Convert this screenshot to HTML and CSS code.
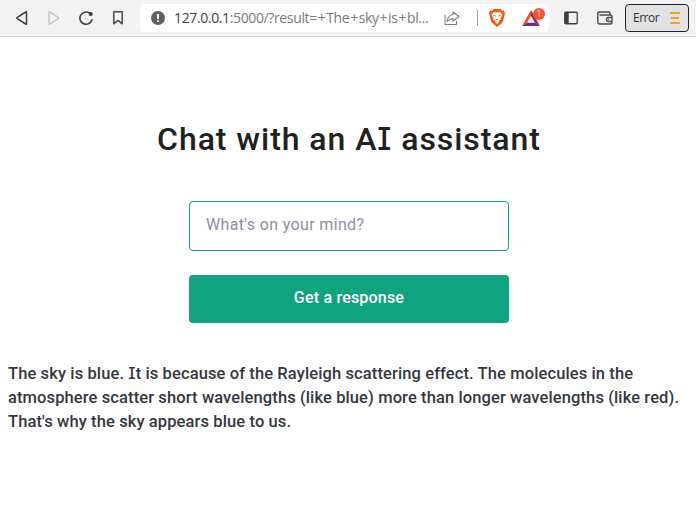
FILE: index.html
```html
<!DOCTYPE html>
<html lang="en">
<head>
<meta charset="utf-8">
<title>Chat with an AI assistant</title>
<link rel="stylesheet" href="styles.css">
</head>
<body>
<header class="toolbar">
  <nav class="nav">
    <svg width="14" height="16" viewBox="0 0 14 16"><path d="M11.500 2.300v11.400q0 .8-.8.3L2.300 8.600q-.8-.6 0-1.200L10.700 2q.8-.5.8.3z" fill="none" stroke="#3b3e43" stroke-width="1.500" stroke-linejoin="round"/></svg>
    <svg width="14" height="16" viewBox="0 0 14 16"><path d="M2 2.300v11.400q0 .8.8.3l8.400-5.400q.8-.6 0-1.200L2.800 2Q2 1.500 2 2.300z" fill="none" stroke="#c3c5c7" stroke-width="1.500" stroke-linejoin="round"/></svg>
    <svg width="14" height="16" viewBox="1 0 14 16"><path d="M11.700 3.300A6.100 6.100 0 1 0 13.900 9.800" fill="none" stroke="#3b3e43" stroke-width="1.600" stroke-linecap="round"/><circle cx="12.700" cy="4" r="2" fill="#3b3e43"/></svg>
    <svg width="14" height="16" viewBox="-1 0 14 16"><path d="M1.800 1.800h8.400v12L6 10.400l-4.200 3.400z" fill="none" stroke="#484b50" stroke-width="1.500" stroke-linejoin="round"/></svg>
  </nav>
  <div class="address">
    <svg class="info" width="14" height="14" viewBox="0 0 14 14"><circle cx="7" cy="7" r="7" fill="#5f6368"/><path d="M7 3v5M7 9.300v1.800" stroke="#fff" stroke-width="1.800"/></svg>
    <span class="url"><span class="host">127.0.0.1</span>:5000/?result=<span class="sep">+</span>The<span class="sep">+</span>sky<span class="sep">+</span>is<span class="sep">+</span>bl...</span>
    <svg class="share" width="16" height="16" viewBox="0 0 16 16"><path d="M1 4.500v10h11.500V11" fill="none" stroke="#777b80"/><path d="M9 2l6 4.500L9 11V8.700Q5.500 8.600 3 11.500 4 5 9 4.500z" fill="none" stroke="#777b80" stroke-width="1.100" stroke-linejoin="round"/></svg>
    <span class="divider"></span>
    <svg class="brave" width="16" height="18" viewBox="0 0 16 18"><path d="M4.500 0h7L13 1.700l1.700-.2L16 4l-.5 2-1.700 6.500q-.3 1-1.200 1.700L8 18l-4.600-3.800q-.9-.7-1.200-1.700L.5 6 0 4l1.300-2.500 1.700.2z" fill="#fb5410"/><path d="M4.700 3l3.300.6 3.300-.6 2.200 3-1.800 3.200.3 1.200-2.300 1.500.3 1.300-2 1.800-2-1.800.3-1.300-2.300-1.500.3-1.200L2.500 6z" fill="#fff"/><path d="M4.400 6.300l2.200.6M11.600 6.300l-2.200.6M6.800 10l1.200.8 1.200-.8" fill="none" stroke="#fb5410" stroke-width=".9"/></svg>
    <span class="rewards">
      <svg width="18" height="16" viewBox="0 0 18 16"><path d="M9 0L0 16l5-3.200 4-7z" fill="#ff4724"/><path d="M0 16h18l-5-3.200H5z" fill="#662d91"/><path d="M9 0l9 16-5-3.200-4-7z" fill="#9e1f63"/></svg>
      <span class="badge">1</span>
    </span>
  </div>
  <svg class="panel" width="14" height="14" viewBox="0 0 14 14"><rect x=".75" y="1.250" width="12.500" height="11.500" rx="1" fill="none" stroke="#3b3e43" stroke-width="1.300"/><path d="M1 1h3.700v12H1z" fill="#3b3e43"/></svg>
  <svg class="wallet" width="16" height="14" viewBox="0 0 16 14"><path d="M13 3.800V2.200Q13 1 11.800 1H2.500Q.8 1 .8 2.500v8.800Q.8 13 2.500 13h11q1.500 0 1.500-1.500V5.300Q15 4 13.500 4H2.500M15 6.500h-3.500a2 2 0 0 0 0 4H15M11.300 8.500h1" fill="none" stroke="#484b50" stroke-width="1.400"/></svg>
  <button class="menu"><span>Error</span><svg width="10" height="12" viewBox="0 0 10 12"><path d="M0 1h10M1 6h8M0 11h10" stroke="#f0a326" stroke-width="2"/></svg></button>
</header>
<main>
  <h1>Chat with an A<span class="i">I</span> assistant</h1>
  <form class="form">
    <input type="text" placeholder="What's on your mind?">
    <button class="submit" type="button">Get a response</button>
  </form>
  <div class="result">
    <div>The sky is blue. <span class="i">I</span>t is because of the Rayleigh scattering effect. The molecules in the</div>
    <div>atmosphere scatter short wavelengths (like blue) more than longer wavelengths (like red).</div>
    <div>That's why the sky appears blue to us.</div>
  </div>
</main>
</body>
</html>
```

FILE: styles.css
```css
* { box-sizing: border-box; }
body { margin: 0; background: #fff; font-family: Roboto, sans-serif; color: #353740; overflow: hidden; }
svg { display: block; flex: none; }
.toolbar { display: flex; align-items: center; height: 37px; padding-bottom: 1px; background: #f2f2f2; border-bottom: 1px solid #d2d6db; }
.nav { display: flex; align-items: center; gap: 18px; width: 140px; flex: none; padding-left: 15px; }
.address { display: flex; align-items: center; width: 409px; height: 28px; flex: none; padding-left: 11px; background: #fff; border-radius: 4px; }
.url { width: 270px; margin-left: 9px; flex: none; font: 14px/20px "Open Sans", sans-serif; letter-spacing: -.37px; color: #777a7e; white-space: nowrap; }
.host { color: #3c4043; }
.sep { padding: 0 .9px; }
.divider { width: 1px; height: 16px; margin: 0 11px 0 17px; background: #a0a3a6; }
.rewards { position: relative; margin-left: 17px; }
.badge { position: absolute; left: 11px; top: -2px; width: 12px; height: 12px; border-radius: 6px; background: #fb542b; color: #fff; font: 9px/12px "Open Sans", sans-serif; text-align: center; }
.panel { margin-left: 15px; }
.wallet { margin-left: 19px; }
.menu { display: flex; align-items: center; justify-content: space-between; width: 64px; height: 28px; margin-left: 12px; padding: 0 8px 0 7px; border: 1px solid #202124; border-radius: 4px; background: #e2e2e2; color: #303236; font: 12px "Open Sans", sans-serif; letter-spacing: -.5px; }
main { padding: 82px 8px 0; }
h1 { margin: 0; padding-left: 2px; font-size: 32px; line-height: 40px; font-weight: 500; text-align: center; color: #202123; letter-spacing: .94px; white-space: nowrap; }
.i { font-family: Inter, sans-serif; font-feature-settings: "cv08"; font-size: .97em; line-height: 0; }
.form { display: flex; flex-direction: column; gap: 24px; width: 320px; margin: 42px auto 0; position: relative; left: 1px; }
input { height: 50px; padding: 0 16px 4px; border: 1px solid #10a37f; border-radius: 4px; font: 16px Roboto, sans-serif; letter-spacing: .35px; outline: none; }
input::placeholder { color: #8e8ea0; }
.submit { height: 48px; padding: 0 0 4px; border: 0; border-radius: 4px; background: #10a37f; color: #fff; font: 500 16px Roboto, sans-serif; letter-spacing: .2px; }
.result { margin-top: 38px; font-size: 16.5px; line-height: 25px; font-weight: 500; letter-spacing: .11px; white-space: nowrap; }
.result div { width: max-content; height: 24px; }
```
